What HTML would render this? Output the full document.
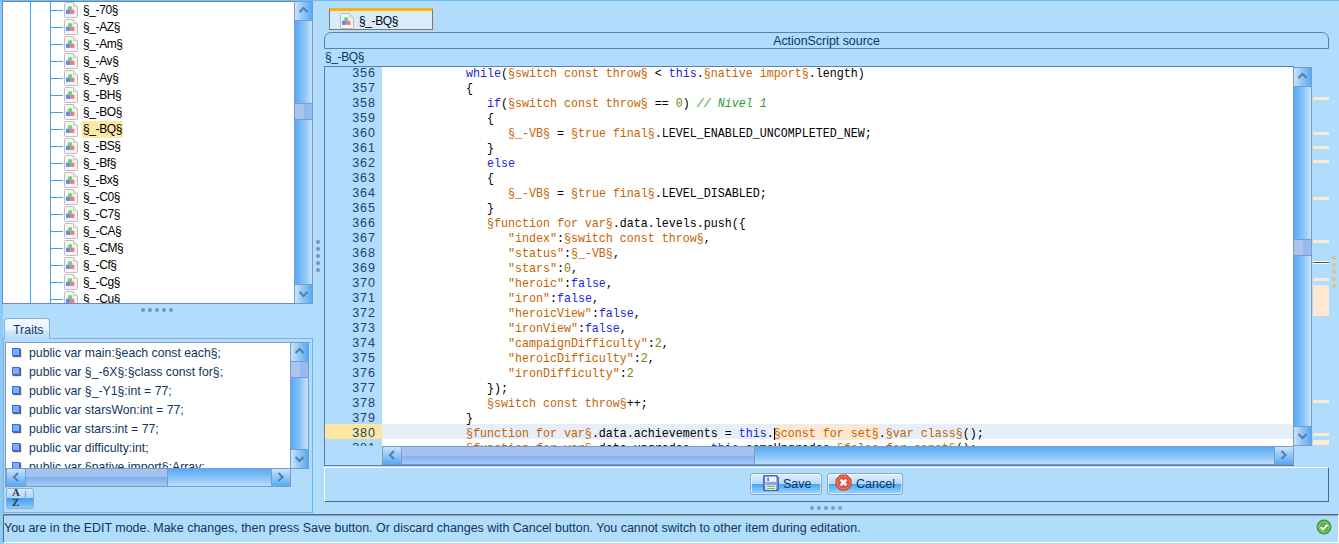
<!DOCTYPE html>
<html><head><meta charset="utf-8"><style>
*{margin:0;padding:0;box-sizing:border-box}
html,body{width:1339px;height:544px;overflow:hidden;background:#b2dcfb;position:relative}
.a{position:absolute}
.t{font-family:"Liberation Sans",sans-serif;white-space:pre}
.vtrack{background:linear-gradient(to right,#58aaf6,#8ac4f8 55%,#c6e4fc);border:1px solid #7d9cc4}
.vbtn{background:linear-gradient(to right,#c8e4fc,#8cc6f8 50%,#58aaf6);border:1px solid #7d9cc4}
.vthumb{background:linear-gradient(to right,#a9c5ee 0,#a9c5ee 55%,#93b7f1 55%,#9cbcf1);border:1px solid #7d9cc4;border-radius:2px}
.htrack{background:linear-gradient(to bottom,#58aaf6,#8ac4f8 55%,#bcdffc);border:1px solid #7d9cc4}
.hbtn{background:linear-gradient(to bottom,#c8e4fc,#8cc6f8 50%,#58aaf6);border:1px solid #7d9cc4}
.hthumb{background:linear-gradient(to bottom,#a4c2ee 0,#a4c2ee 50%,#80aef0 50%,#a8c8f4);border:1px solid #7d9cc4;border-radius:2px}
.tree{font-size:12px;line-height:17px;color:#000;letter-spacing:-0.4px}
.trait{font-size:12.25px;line-height:18px;color:#0f3560}
.status{font-size:12.45px;line-height:18px;color:#0f3560}
.lnum{width:51px;text-align:right;font-size:12.5px;line-height:15px;color:#1b4274;letter-spacing:1px}
.code{font-family:"Liberation Mono",monospace;font-size:11.67px;line-height:15px;white-space:pre;color:#000;transform:scaleY(1.17);transform-origin:0 10px}
.k{color:#2424dc}.o{color:#c46400}.n{color:#7e8010}.c{color:#2f9a2f;font-style:italic}
.bullet{width:8px;height:8px;background:#82aaf8;border:1px solid #2d6ef6;box-shadow:1px 1px 1px rgba(40,30,20,.7)}
.tab{border:1px solid #8aaed2;border-bottom:none;border-radius:4px 4px 0 0;background:linear-gradient(#f4f9fe 0%,#e6f2fc 55%,#d4e4f0 60%,#c4e2fb 80%,#b6ddfb 100%)}
.azbtn{border:1px solid #8aaed2;border-radius:3px;background:linear-gradient(#d8ecfd,#a8d4fa 48%,#3aa0f8 50%,#8ccaf8)}
.btn{border:1px solid #8aa8cc;border-radius:3px;box-shadow:inset 1px 1px 0 rgba(255,255,255,.7),inset -1px -1px 0 rgba(255,255,255,.5);background:linear-gradient(#e2f1fd,#b4dafb 48%,#40a6f8 50%,#a6d4fa)}
.btnt{font-size:12.5px;line-height:16px;color:#0f3560}
</style></head><body>
<div class="a" style="left:0px;top:0px;width:1339px;height:1px;background:#6dbdf4"></div>
<div class="a" style="left:0px;top:1px;width:2px;height:543px;background:#8ccaf8"></div>
<div class="a" style="left:2px;top:304px;width:1px;height:240px;background:#8ec6f2"></div>
<div class="a" style="left:2px;top:1px;width:292px;height:303px;background:#fff;border:1px solid #6b8bb3;border-right:none"></div>
<div class="a" style="left:30px;top:2px;width:1px;height:301px;background:#3fa2f6"></div>
<div class="a" style="left:50px;top:2px;width:1px;height:301px;background:#3fa2f6"></div>
<div class="a" style="left:3px;top:2px;width:291px;height:301px;overflow:hidden">
<div class="a" style="left:48px;top:8px;width:12px;height:1px;background:#3fa2f6"></div>
<div style="position:absolute;left:61px;top:0px">
<svg class="a" style="left:0px;top:0px" width="15" height="16" viewBox="0 0 15 16">
<path d="M0.5 1.5 Q0.5 0.5 1.5 0.5 H9.5 L13.5 4.5 V14.5 Q13.5 15.5 12.5 15.5 H1.5 Q0.5 15.5 0.5 14.5 Z" fill="#f4f4f4" stroke="#bdbdbd"/>
<path d="M9.5 0.5 V4.5 H13.5" fill="#e6e6e6" stroke="#cfcfcf"/>
<rect x="2" y="7.7" width="4.4" height="4.2" fill="#5a8cf2"/>
<rect x="6.2" y="7.7" width="4.2" height="4.2" fill="#f27a7a"/>
<circle cx="6.1" cy="6.3" r="2.2" fill="#6ad66a"/>
</svg>
</div>
<div class="a t tree" style="left:80px;top:0px">§_-70§</div>
<div class="a" style="left:48px;top:25px;width:12px;height:1px;background:#3fa2f6"></div>
<div style="position:absolute;left:61px;top:17px">
<svg class="a" style="left:0px;top:0px" width="15" height="16" viewBox="0 0 15 16">
<path d="M0.5 1.5 Q0.5 0.5 1.5 0.5 H9.5 L13.5 4.5 V14.5 Q13.5 15.5 12.5 15.5 H1.5 Q0.5 15.5 0.5 14.5 Z" fill="#f4f4f4" stroke="#bdbdbd"/>
<path d="M9.5 0.5 V4.5 H13.5" fill="#e6e6e6" stroke="#cfcfcf"/>
<rect x="2" y="7.7" width="4.4" height="4.2" fill="#5a8cf2"/>
<rect x="6.2" y="7.7" width="4.2" height="4.2" fill="#f27a7a"/>
<circle cx="6.1" cy="6.3" r="2.2" fill="#6ad66a"/>
</svg>
</div>
<div class="a t tree" style="left:80px;top:17px">§_-AZ§</div>
<div class="a" style="left:48px;top:42px;width:12px;height:1px;background:#3fa2f6"></div>
<div style="position:absolute;left:61px;top:34px">
<svg class="a" style="left:0px;top:0px" width="15" height="16" viewBox="0 0 15 16">
<path d="M0.5 1.5 Q0.5 0.5 1.5 0.5 H9.5 L13.5 4.5 V14.5 Q13.5 15.5 12.5 15.5 H1.5 Q0.5 15.5 0.5 14.5 Z" fill="#f4f4f4" stroke="#bdbdbd"/>
<path d="M9.5 0.5 V4.5 H13.5" fill="#e6e6e6" stroke="#cfcfcf"/>
<rect x="2" y="7.7" width="4.4" height="4.2" fill="#5a8cf2"/>
<rect x="6.2" y="7.7" width="4.2" height="4.2" fill="#f27a7a"/>
<circle cx="6.1" cy="6.3" r="2.2" fill="#6ad66a"/>
</svg>
</div>
<div class="a t tree" style="left:80px;top:34px">§_-Am§</div>
<div class="a" style="left:48px;top:59px;width:12px;height:1px;background:#3fa2f6"></div>
<div style="position:absolute;left:61px;top:51px">
<svg class="a" style="left:0px;top:0px" width="15" height="16" viewBox="0 0 15 16">
<path d="M0.5 1.5 Q0.5 0.5 1.5 0.5 H9.5 L13.5 4.5 V14.5 Q13.5 15.5 12.5 15.5 H1.5 Q0.5 15.5 0.5 14.5 Z" fill="#f4f4f4" stroke="#bdbdbd"/>
<path d="M9.5 0.5 V4.5 H13.5" fill="#e6e6e6" stroke="#cfcfcf"/>
<rect x="2" y="7.7" width="4.4" height="4.2" fill="#5a8cf2"/>
<rect x="6.2" y="7.7" width="4.2" height="4.2" fill="#f27a7a"/>
<circle cx="6.1" cy="6.3" r="2.2" fill="#6ad66a"/>
</svg>
</div>
<div class="a t tree" style="left:80px;top:51px">§_-Av§</div>
<div class="a" style="left:48px;top:76px;width:12px;height:1px;background:#3fa2f6"></div>
<div style="position:absolute;left:61px;top:68px">
<svg class="a" style="left:0px;top:0px" width="15" height="16" viewBox="0 0 15 16">
<path d="M0.5 1.5 Q0.5 0.5 1.5 0.5 H9.5 L13.5 4.5 V14.5 Q13.5 15.5 12.5 15.5 H1.5 Q0.5 15.5 0.5 14.5 Z" fill="#f4f4f4" stroke="#bdbdbd"/>
<path d="M9.5 0.5 V4.5 H13.5" fill="#e6e6e6" stroke="#cfcfcf"/>
<rect x="2" y="7.7" width="4.4" height="4.2" fill="#5a8cf2"/>
<rect x="6.2" y="7.7" width="4.2" height="4.2" fill="#f27a7a"/>
<circle cx="6.1" cy="6.3" r="2.2" fill="#6ad66a"/>
</svg>
</div>
<div class="a t tree" style="left:80px;top:68px">§_-Ay§</div>
<div class="a" style="left:48px;top:93px;width:12px;height:1px;background:#3fa2f6"></div>
<div style="position:absolute;left:61px;top:85px">
<svg class="a" style="left:0px;top:0px" width="15" height="16" viewBox="0 0 15 16">
<path d="M0.5 1.5 Q0.5 0.5 1.5 0.5 H9.5 L13.5 4.5 V14.5 Q13.5 15.5 12.5 15.5 H1.5 Q0.5 15.5 0.5 14.5 Z" fill="#f4f4f4" stroke="#bdbdbd"/>
<path d="M9.5 0.5 V4.5 H13.5" fill="#e6e6e6" stroke="#cfcfcf"/>
<rect x="2" y="7.7" width="4.4" height="4.2" fill="#5a8cf2"/>
<rect x="6.2" y="7.7" width="4.2" height="4.2" fill="#f27a7a"/>
<circle cx="6.1" cy="6.3" r="2.2" fill="#6ad66a"/>
</svg>
</div>
<div class="a t tree" style="left:80px;top:85px">§_-BH§</div>
<div class="a" style="left:48px;top:110px;width:12px;height:1px;background:#3fa2f6"></div>
<div style="position:absolute;left:61px;top:102px">
<svg class="a" style="left:0px;top:0px" width="15" height="16" viewBox="0 0 15 16">
<path d="M0.5 1.5 Q0.5 0.5 1.5 0.5 H9.5 L13.5 4.5 V14.5 Q13.5 15.5 12.5 15.5 H1.5 Q0.5 15.5 0.5 14.5 Z" fill="#f4f4f4" stroke="#bdbdbd"/>
<path d="M9.5 0.5 V4.5 H13.5" fill="#e6e6e6" stroke="#cfcfcf"/>
<rect x="2" y="7.7" width="4.4" height="4.2" fill="#5a8cf2"/>
<rect x="6.2" y="7.7" width="4.2" height="4.2" fill="#f27a7a"/>
<circle cx="6.1" cy="6.3" r="2.2" fill="#6ad66a"/>
</svg>
</div>
<div class="a t tree" style="left:80px;top:102px">§_-BO§</div>
<div class="a" style="left:48px;top:127px;width:12px;height:1px;background:#3fa2f6"></div>
<div style="position:absolute;left:61px;top:119px">
<svg class="a" style="left:0px;top:0px" width="15" height="16" viewBox="0 0 15 16">
<path d="M0.5 1.5 Q0.5 0.5 1.5 0.5 H9.5 L13.5 4.5 V14.5 Q13.5 15.5 12.5 15.5 H1.5 Q0.5 15.5 0.5 14.5 Z" fill="#f4f4f4" stroke="#bdbdbd"/>
<path d="M9.5 0.5 V4.5 H13.5" fill="#e6e6e6" stroke="#cfcfcf"/>
<rect x="2" y="7.7" width="4.4" height="4.2" fill="#5a8cf2"/>
<rect x="6.2" y="7.7" width="4.2" height="4.2" fill="#f27a7a"/>
<circle cx="6.1" cy="6.3" r="2.2" fill="#6ad66a"/>
</svg>
</div>
<div class="a" style="left:79px;top:119px;width:41px;height:17px;background:#fde9a3"></div>
<div class="a t tree" style="left:80px;top:119px">§_-BQ§</div>
<div class="a" style="left:48px;top:144px;width:12px;height:1px;background:#3fa2f6"></div>
<div style="position:absolute;left:61px;top:136px">
<svg class="a" style="left:0px;top:0px" width="15" height="16" viewBox="0 0 15 16">
<path d="M0.5 1.5 Q0.5 0.5 1.5 0.5 H9.5 L13.5 4.5 V14.5 Q13.5 15.5 12.5 15.5 H1.5 Q0.5 15.5 0.5 14.5 Z" fill="#f4f4f4" stroke="#bdbdbd"/>
<path d="M9.5 0.5 V4.5 H13.5" fill="#e6e6e6" stroke="#cfcfcf"/>
<rect x="2" y="7.7" width="4.4" height="4.2" fill="#5a8cf2"/>
<rect x="6.2" y="7.7" width="4.2" height="4.2" fill="#f27a7a"/>
<circle cx="6.1" cy="6.3" r="2.2" fill="#6ad66a"/>
</svg>
</div>
<div class="a t tree" style="left:80px;top:136px">§_-BS§</div>
<div class="a" style="left:48px;top:161px;width:12px;height:1px;background:#3fa2f6"></div>
<div style="position:absolute;left:61px;top:153px">
<svg class="a" style="left:0px;top:0px" width="15" height="16" viewBox="0 0 15 16">
<path d="M0.5 1.5 Q0.5 0.5 1.5 0.5 H9.5 L13.5 4.5 V14.5 Q13.5 15.5 12.5 15.5 H1.5 Q0.5 15.5 0.5 14.5 Z" fill="#f4f4f4" stroke="#bdbdbd"/>
<path d="M9.5 0.5 V4.5 H13.5" fill="#e6e6e6" stroke="#cfcfcf"/>
<rect x="2" y="7.7" width="4.4" height="4.2" fill="#5a8cf2"/>
<rect x="6.2" y="7.7" width="4.2" height="4.2" fill="#f27a7a"/>
<circle cx="6.1" cy="6.3" r="2.2" fill="#6ad66a"/>
</svg>
</div>
<div class="a t tree" style="left:80px;top:153px">§_-Bf§</div>
<div class="a" style="left:48px;top:178px;width:12px;height:1px;background:#3fa2f6"></div>
<div style="position:absolute;left:61px;top:170px">
<svg class="a" style="left:0px;top:0px" width="15" height="16" viewBox="0 0 15 16">
<path d="M0.5 1.5 Q0.5 0.5 1.5 0.5 H9.5 L13.5 4.5 V14.5 Q13.5 15.5 12.5 15.5 H1.5 Q0.5 15.5 0.5 14.5 Z" fill="#f4f4f4" stroke="#bdbdbd"/>
<path d="M9.5 0.5 V4.5 H13.5" fill="#e6e6e6" stroke="#cfcfcf"/>
<rect x="2" y="7.7" width="4.4" height="4.2" fill="#5a8cf2"/>
<rect x="6.2" y="7.7" width="4.2" height="4.2" fill="#f27a7a"/>
<circle cx="6.1" cy="6.3" r="2.2" fill="#6ad66a"/>
</svg>
</div>
<div class="a t tree" style="left:80px;top:170px">§_-Bx§</div>
<div class="a" style="left:48px;top:195px;width:12px;height:1px;background:#3fa2f6"></div>
<div style="position:absolute;left:61px;top:187px">
<svg class="a" style="left:0px;top:0px" width="15" height="16" viewBox="0 0 15 16">
<path d="M0.5 1.5 Q0.5 0.5 1.5 0.5 H9.5 L13.5 4.5 V14.5 Q13.5 15.5 12.5 15.5 H1.5 Q0.5 15.5 0.5 14.5 Z" fill="#f4f4f4" stroke="#bdbdbd"/>
<path d="M9.5 0.5 V4.5 H13.5" fill="#e6e6e6" stroke="#cfcfcf"/>
<rect x="2" y="7.7" width="4.4" height="4.2" fill="#5a8cf2"/>
<rect x="6.2" y="7.7" width="4.2" height="4.2" fill="#f27a7a"/>
<circle cx="6.1" cy="6.3" r="2.2" fill="#6ad66a"/>
</svg>
</div>
<div class="a t tree" style="left:80px;top:187px">§_-C0§</div>
<div class="a" style="left:48px;top:212px;width:12px;height:1px;background:#3fa2f6"></div>
<div style="position:absolute;left:61px;top:204px">
<svg class="a" style="left:0px;top:0px" width="15" height="16" viewBox="0 0 15 16">
<path d="M0.5 1.5 Q0.5 0.5 1.5 0.5 H9.5 L13.5 4.5 V14.5 Q13.5 15.5 12.5 15.5 H1.5 Q0.5 15.5 0.5 14.5 Z" fill="#f4f4f4" stroke="#bdbdbd"/>
<path d="M9.5 0.5 V4.5 H13.5" fill="#e6e6e6" stroke="#cfcfcf"/>
<rect x="2" y="7.7" width="4.4" height="4.2" fill="#5a8cf2"/>
<rect x="6.2" y="7.7" width="4.2" height="4.2" fill="#f27a7a"/>
<circle cx="6.1" cy="6.3" r="2.2" fill="#6ad66a"/>
</svg>
</div>
<div class="a t tree" style="left:80px;top:204px">§_-C7§</div>
<div class="a" style="left:48px;top:229px;width:12px;height:1px;background:#3fa2f6"></div>
<div style="position:absolute;left:61px;top:221px">
<svg class="a" style="left:0px;top:0px" width="15" height="16" viewBox="0 0 15 16">
<path d="M0.5 1.5 Q0.5 0.5 1.5 0.5 H9.5 L13.5 4.5 V14.5 Q13.5 15.5 12.5 15.5 H1.5 Q0.5 15.5 0.5 14.5 Z" fill="#f4f4f4" stroke="#bdbdbd"/>
<path d="M9.5 0.5 V4.5 H13.5" fill="#e6e6e6" stroke="#cfcfcf"/>
<rect x="2" y="7.7" width="4.4" height="4.2" fill="#5a8cf2"/>
<rect x="6.2" y="7.7" width="4.2" height="4.2" fill="#f27a7a"/>
<circle cx="6.1" cy="6.3" r="2.2" fill="#6ad66a"/>
</svg>
</div>
<div class="a t tree" style="left:80px;top:221px">§_-CA§</div>
<div class="a" style="left:48px;top:246px;width:12px;height:1px;background:#3fa2f6"></div>
<div style="position:absolute;left:61px;top:238px">
<svg class="a" style="left:0px;top:0px" width="15" height="16" viewBox="0 0 15 16">
<path d="M0.5 1.5 Q0.5 0.5 1.5 0.5 H9.5 L13.5 4.5 V14.5 Q13.5 15.5 12.5 15.5 H1.5 Q0.5 15.5 0.5 14.5 Z" fill="#f4f4f4" stroke="#bdbdbd"/>
<path d="M9.5 0.5 V4.5 H13.5" fill="#e6e6e6" stroke="#cfcfcf"/>
<rect x="2" y="7.7" width="4.4" height="4.2" fill="#5a8cf2"/>
<rect x="6.2" y="7.7" width="4.2" height="4.2" fill="#f27a7a"/>
<circle cx="6.1" cy="6.3" r="2.2" fill="#6ad66a"/>
</svg>
</div>
<div class="a t tree" style="left:80px;top:238px">§_-CM§</div>
<div class="a" style="left:48px;top:263px;width:12px;height:1px;background:#3fa2f6"></div>
<div style="position:absolute;left:61px;top:255px">
<svg class="a" style="left:0px;top:0px" width="15" height="16" viewBox="0 0 15 16">
<path d="M0.5 1.5 Q0.5 0.5 1.5 0.5 H9.5 L13.5 4.5 V14.5 Q13.5 15.5 12.5 15.5 H1.5 Q0.5 15.5 0.5 14.5 Z" fill="#f4f4f4" stroke="#bdbdbd"/>
<path d="M9.5 0.5 V4.5 H13.5" fill="#e6e6e6" stroke="#cfcfcf"/>
<rect x="2" y="7.7" width="4.4" height="4.2" fill="#5a8cf2"/>
<rect x="6.2" y="7.7" width="4.2" height="4.2" fill="#f27a7a"/>
<circle cx="6.1" cy="6.3" r="2.2" fill="#6ad66a"/>
</svg>
</div>
<div class="a t tree" style="left:80px;top:255px">§_-Cf§</div>
<div class="a" style="left:48px;top:280px;width:12px;height:1px;background:#3fa2f6"></div>
<div style="position:absolute;left:61px;top:272px">
<svg class="a" style="left:0px;top:0px" width="15" height="16" viewBox="0 0 15 16">
<path d="M0.5 1.5 Q0.5 0.5 1.5 0.5 H9.5 L13.5 4.5 V14.5 Q13.5 15.5 12.5 15.5 H1.5 Q0.5 15.5 0.5 14.5 Z" fill="#f4f4f4" stroke="#bdbdbd"/>
<path d="M9.5 0.5 V4.5 H13.5" fill="#e6e6e6" stroke="#cfcfcf"/>
<rect x="2" y="7.7" width="4.4" height="4.2" fill="#5a8cf2"/>
<rect x="6.2" y="7.7" width="4.2" height="4.2" fill="#f27a7a"/>
<circle cx="6.1" cy="6.3" r="2.2" fill="#6ad66a"/>
</svg>
</div>
<div class="a t tree" style="left:80px;top:272px">§_-Cg§</div>
<div class="a" style="left:48px;top:297px;width:12px;height:1px;background:#3fa2f6"></div>
<div style="position:absolute;left:61px;top:289px">
<svg class="a" style="left:0px;top:0px" width="15" height="16" viewBox="0 0 15 16">
<path d="M0.5 1.5 Q0.5 0.5 1.5 0.5 H9.5 L13.5 4.5 V14.5 Q13.5 15.5 12.5 15.5 H1.5 Q0.5 15.5 0.5 14.5 Z" fill="#f4f4f4" stroke="#bdbdbd"/>
<path d="M9.5 0.5 V4.5 H13.5" fill="#e6e6e6" stroke="#cfcfcf"/>
<rect x="2" y="7.7" width="4.4" height="4.2" fill="#5a8cf2"/>
<rect x="6.2" y="7.7" width="4.2" height="4.2" fill="#f27a7a"/>
<circle cx="6.1" cy="6.3" r="2.2" fill="#6ad66a"/>
</svg>
</div>
<div class="a t tree" style="left:80px;top:289px">§_-Cu§</div>
</div>
<div class="a" style="left:294px;top:1px;width:19px;height:303px;background:#b2dcfb"></div>
<div class="a vtrack" style="left:294px;top:20px;width:19px;height:265px"></div>
<div class="a vbtn" style="left:294px;top:1px;width:19px;height:20px"></div>
<div class="a vbtn" style="left:294px;top:284px;width:19px;height:20px"></div>
<div class="a vthumb" style="left:294px;top:103px;width:19px;height:17px"></div>
<svg class="a" style="left:294px;top:1px" width="19" height="303"><polyline points="5.5,11.0 9.5,7.0 13.5,11.0" fill="none" stroke="#5b7aa6" stroke-width="2"/><polyline points="5.5,291.0 9.5,295.0 13.5,291.0" fill="none" stroke="#5b7aa6" stroke-width="2"/></svg>
<svg class="a" style="left:0;top:0" width="1339" height="544"><circle cx="143" cy="310" r="2" fill="#7094c4"/><circle cx="318" cy="242" r="2" fill="#7094c4"/><circle cx="812" cy="508" r="2" fill="#7a9cc4"/><circle cx="150" cy="310" r="2" fill="#7094c4"/><circle cx="318" cy="249" r="2" fill="#7094c4"/><circle cx="819" cy="508" r="2" fill="#7a9cc4"/><circle cx="157" cy="310" r="2" fill="#7094c4"/><circle cx="318" cy="256" r="2" fill="#7094c4"/><circle cx="826" cy="508" r="2" fill="#7a9cc4"/><circle cx="164" cy="310" r="2" fill="#7094c4"/><circle cx="318" cy="263" r="2" fill="#7094c4"/><circle cx="833" cy="508" r="2" fill="#7a9cc4"/><circle cx="171" cy="310" r="2" fill="#7094c4"/><circle cx="318" cy="270" r="2" fill="#7094c4"/><circle cx="840" cy="508" r="2" fill="#7a9cc4"/></svg>
<div class="a" style="left:3px;top:338px;width:310px;height:175px;border-top:1px solid #8aaed2;border-left:1px solid #8aaed2;border-right:1px solid #62b8f8;border-bottom:1px solid #62b8f8"></div>
<div class="a tab" style="left:4px;top:318px;width:46px;height:21px"><span class="t" style="position:absolute;left:8px;top:4px;font-size:12.4px;color:#0f3a70">Traits</span></div>
<div class="a" style="left:5px;top:342px;width:305px;height:146px;border:1px solid #7f9fc6;border-right:none;border-bottom:none"></div>
<div class="a" style="left:6px;top:343px;width:284px;height:125px;background:#fff"></div>
<div class="a" style="left:6px;top:343px;width:284px;height:125px;overflow:hidden">
<div class="a bullet" style="left:6px;top:5px"></div>
<div class="a t trait" style="left:23px;top:1px">public var main:§each const each§;</div>
<div class="a bullet" style="left:6px;top:24px"></div>
<div class="a t trait" style="left:23px;top:20px">public var §_-6X§:§class const for§;</div>
<div class="a bullet" style="left:6px;top:43px"></div>
<div class="a t trait" style="left:23px;top:39px">public var §_-Y1§:int = 77;</div>
<div class="a bullet" style="left:6px;top:62px"></div>
<div class="a t trait" style="left:23px;top:58px">public var starsWon:int = 77;</div>
<div class="a bullet" style="left:6px;top:81px"></div>
<div class="a t trait" style="left:23px;top:77px">public var stars:int = 77;</div>
<div class="a bullet" style="left:6px;top:100px"></div>
<div class="a t trait" style="left:23px;top:96px">public var difficulty:int;</div>
<div class="a bullet" style="left:6px;top:119px"></div>
<div class="a t trait" style="left:23px;top:115px">public var §native import§:Array;</div>
</div>
<div class="a" style="left:290px;top:342px;width:19px;height:127px;background:#b2dcfb"></div>
<div class="a vtrack" style="left:290px;top:361px;width:19px;height:89px"></div>
<div class="a vbtn" style="left:290px;top:342px;width:19px;height:20px"></div>
<div class="a vbtn" style="left:290px;top:449px;width:19px;height:20px"></div>
<div class="a vthumb" style="left:290px;top:361px;width:19px;height:17px"></div>
<svg class="a" style="left:290px;top:342px" width="19" height="127"><polyline points="5.5,11.0 9.5,7.0 13.5,11.0" fill="none" stroke="#5b7aa6" stroke-width="2"/><polyline points="5.5,115.0 9.5,119.0 13.5,115.0" fill="none" stroke="#5b7aa6" stroke-width="2"/></svg>
<div class="a htrack" style="left:6px;top:468px;width:285px;height:19px"></div>
<div class="a hbtn" style="left:6px;top:468px;width:20px;height:19px"></div>
<div class="a hbtn" style="left:271px;top:468px;width:20px;height:19px"></div>
<div class="a hthumb" style="left:25px;top:468px;width:143px;height:19px"></div>
<svg class="a" style="left:6px;top:468px" width="285" height="19"><polyline points="12.0,5.0 8.0,9.0 12.0,13.0" fill="none" stroke="#5b7aa6" stroke-width="2"/><polyline points="272.5,5.0 276.5,9.0 272.5,13.0" fill="none" stroke="#5b7aa6" stroke-width="2"/></svg>
<div class="a azbtn" style="left:6px;top:488px;width:28px;height:21px"></div>
<div class="a" style="left:12px;top:488px;font-family:'Liberation Serif',serif;font-weight:bold;font-size:11px;line-height:9.5px;color:#3a3a3a">A<br>Z</div>
<div class="a" style="left:25px;top:491px;width:1px;height:12px;background:#7b9ce0"></div>
<svg class="a" style="left:22px;top:498px" width="7" height="6"><polyline points="0.5,0.5 3.5,4.5 6.5,0.5" fill="none" stroke="#7b9ce0" stroke-width="1"/></svg>
<div class="a" style="left:3px;top:515px;width:1336px;height:28px;background:transparent"></div>
<div class="a" style="left:4px;top:515px;width:1334px;height:1px;background:#8aa2ba"></div>
<div class="a" style="left:3px;top:514px;width:1336px;height:29px;border-top:1px solid #56687c;border-left:1px solid #56687c;border-right:1px solid #fff;border-bottom:1px solid #fff"></div>
<div class="a t status" style="left:4px;top:519px">You are in the EDIT mode. Make changes, then press Save button. Or discard changes with Cancel button. You cannot switch to other item during editation.</div>
<svg class="a" style="left:1316px;top:519px" width="16" height="16" viewBox="0 0 16 16">
<circle cx="8" cy="8" r="6.8" fill="#58b048" stroke="#2f9a2f" stroke-width="1.2"/>
<circle cx="8" cy="8" r="5.2" fill="none" stroke="#9ed88e" stroke-width="0.8"/>
<path d="M4.6 8.2 L7 10.4 L11.4 5.8" fill="none" stroke="#fff" stroke-width="2"/>
</svg>
<div class="a" style="left:329px;top:8px;width:104px;height:22px;background:#d8ecfc;border:1px solid #8a7658;border-top:3px solid #fdb10c"></div>
<svg class="a" style="left:340px;top:13px" width="15" height="16" viewBox="0 0 15 16">
<path d="M0.5 1.5 Q0.5 0.5 1.5 0.5 H9.5 L13.5 4.5 V14.5 Q13.5 15.5 12.5 15.5 H1.5 Q0.5 15.5 0.5 14.5 Z" fill="#f4f4f4" stroke="#bdbdbd"/>
<path d="M9.5 0.5 V4.5 H13.5" fill="#e6e6e6" stroke="#cfcfcf"/>
<rect x="2" y="7.7" width="4.4" height="4.2" fill="#5a8cf2"/>
<rect x="6.2" y="7.7" width="4.2" height="4.2" fill="#f27a7a"/>
<circle cx="6.1" cy="6.3" r="2.2" fill="#6ad66a"/>
</svg>
<div class="a t tree" style="left:359px;top:13px">§_-BQ§</div>
<div class="a" style="left:324px;top:32px;width:1005px;height:17px;border:1px solid #5f7fa6;border-radius:7px 7px 0 0;border-bottom:1px solid #5f7fa6"></div>
<div class="a t" style="left:324px;top:34px;width:1005px;text-align:center;font-size:12.4px;line-height:15px;color:#0f3560">ActionScript source</div>
<div class="a t tree" style="left:325px;top:49px;color:#0f3560">§_-BQ§</div>
<div class="a" style="left:324px;top:66px;width:970px;height:400px;border:1px solid #5f7fa6;border-right:none;border-bottom:1px solid #5f7fa6"></div>
<div class="a" style="left:382px;top:67px;width:911px;height:379px;background:#fff"></div>
<div class="a" style="left:382px;top:424px;width:911px;height:15px;background:#e8eef8"></div>
<div class="a" style="left:325px;top:424px;width:57px;height:15px;background:#fde7a0"></div>
<div class="a" style="left:325px;top:67px;width:968px;height:379px;overflow:hidden">
<div class="a" style="left:450px;top:358px;width:105px;height:15px;background:#fde8d4"></div>
<div class="a code" style="left:57px;top:0px">            <span class="k">while</span>(<span class="o">§switch const throw§</span> &lt; <span class="k">this</span>.<span class="o">§native import§</span>.length)</div>
<div class="a t lnum" style="left:0px;top:-1px">356</div>
<div class="a code" style="left:57px;top:15px">            {</div>
<div class="a t lnum" style="left:0px;top:14px">357</div>
<div class="a code" style="left:57px;top:30px">               <span class="k">if</span>(<span class="o">§switch const throw§</span> == <span class="n">0</span>) <span class="c">// Nivel 1</span></div>
<div class="a t lnum" style="left:0px;top:29px">358</div>
<div class="a code" style="left:57px;top:45px">               {</div>
<div class="a t lnum" style="left:0px;top:44px">359</div>
<div class="a code" style="left:57px;top:60px">                  <span class="o">§_-VB§</span> = <span class="o">§true final§</span>.LEVEL_ENABLED_UNCOMPLETED_NEW;</div>
<div class="a t lnum" style="left:0px;top:59px">360</div>
<div class="a code" style="left:57px;top:75px">               }</div>
<div class="a t lnum" style="left:0px;top:74px">361</div>
<div class="a code" style="left:57px;top:90px">               <span class="k">else</span></div>
<div class="a t lnum" style="left:0px;top:89px">362</div>
<div class="a code" style="left:57px;top:105px">               {</div>
<div class="a t lnum" style="left:0px;top:104px">363</div>
<div class="a code" style="left:57px;top:120px">                  <span class="o">§_-VB§</span> = <span class="o">§true final§</span>.LEVEL_DISABLED;</div>
<div class="a t lnum" style="left:0px;top:119px">364</div>
<div class="a code" style="left:57px;top:135px">               }</div>
<div class="a t lnum" style="left:0px;top:134px">365</div>
<div class="a code" style="left:57px;top:150px">               <span class="o">§function for var§</span>.data.levels.push({</div>
<div class="a t lnum" style="left:0px;top:149px">366</div>
<div class="a code" style="left:57px;top:165px">                  <span class="o">&quot;index&quot;</span>:<span class="o">§switch const throw§</span>,</div>
<div class="a t lnum" style="left:0px;top:164px">367</div>
<div class="a code" style="left:57px;top:180px">                  <span class="o">&quot;status&quot;</span>:<span class="o">§_-VB§</span>,</div>
<div class="a t lnum" style="left:0px;top:179px">368</div>
<div class="a code" style="left:57px;top:195px">                  <span class="o">&quot;stars&quot;</span>:<span class="n">0</span>,</div>
<div class="a t lnum" style="left:0px;top:194px">369</div>
<div class="a code" style="left:57px;top:210px">                  <span class="o">&quot;heroic&quot;</span>:<span class="k">false</span>,</div>
<div class="a t lnum" style="left:0px;top:209px">370</div>
<div class="a code" style="left:57px;top:225px">                  <span class="o">&quot;iron&quot;</span>:<span class="k">false</span>,</div>
<div class="a t lnum" style="left:0px;top:224px">371</div>
<div class="a code" style="left:57px;top:240px">                  <span class="o">&quot;heroicView&quot;</span>:<span class="k">false</span>,</div>
<div class="a t lnum" style="left:0px;top:239px">372</div>
<div class="a code" style="left:57px;top:255px">                  <span class="o">&quot;ironView&quot;</span>:<span class="k">false</span>,</div>
<div class="a t lnum" style="left:0px;top:254px">373</div>
<div class="a code" style="left:57px;top:270px">                  <span class="o">&quot;campaignDifficulty&quot;</span>:<span class="n">2</span>,</div>
<div class="a t lnum" style="left:0px;top:269px">374</div>
<div class="a code" style="left:57px;top:285px">                  <span class="o">&quot;heroicDifficulty&quot;</span>:<span class="n">2</span>,</div>
<div class="a t lnum" style="left:0px;top:284px">375</div>
<div class="a code" style="left:57px;top:300px">                  <span class="o">&quot;ironDifficulty&quot;</span>:<span class="n">2</span></div>
<div class="a t lnum" style="left:0px;top:299px">376</div>
<div class="a code" style="left:57px;top:315px">               });</div>
<div class="a t lnum" style="left:0px;top:314px">377</div>
<div class="a code" style="left:57px;top:330px">               <span class="o">§switch const throw§</span>++;</div>
<div class="a t lnum" style="left:0px;top:329px">378</div>
<div class="a code" style="left:57px;top:345px">            }</div>
<div class="a t lnum" style="left:0px;top:344px">379</div>
<div class="a code" style="left:57px;top:360px">            <span class="o">§function for var§</span>.data.achievements = <span class="k">this</span>.<span class="o">§const for set§</span>.<span class="o">§var class§</span>();</div>
<div class="a t lnum" style="left:0px;top:359px">380</div>
<div class="a code" style="left:57px;top:375px">            <span class="o">§function for var§</span>.data.upgrades = <span class="k">this</span>.someUpgrades.<span class="o">§false for const§</span>();</div>
<div class="a t lnum" style="left:0px;top:374px">381</div>
<div class="a" style="left:449px;top:361px;width:1px;height:12px;background:#000"></div>
</div>
<div class="a" style="left:1293px;top:67px;width:19px;height:379px;background:#b2dcfb"></div>
<div class="a vtrack" style="left:1293px;top:86px;width:19px;height:341px"></div>
<div class="a vbtn" style="left:1293px;top:67px;width:19px;height:20px"></div>
<div class="a vbtn" style="left:1293px;top:426px;width:19px;height:20px"></div>
<div class="a vthumb" style="left:1293px;top:239px;width:19px;height:17px"></div>
<svg class="a" style="left:1293px;top:67px" width="19" height="379"><polyline points="5.5,11.0 9.5,7.0 13.5,11.0" fill="none" stroke="#5b7aa6" stroke-width="2"/><polyline points="5.5,367.0 9.5,371.0 13.5,367.0" fill="none" stroke="#5b7aa6" stroke-width="2"/></svg>
<div class="a htrack" style="left:382px;top:446px;width:912px;height:19px"></div>
<div class="a hbtn" style="left:382px;top:446px;width:20px;height:19px"></div>
<div class="a hbtn" style="left:1274px;top:446px;width:20px;height:19px"></div>
<div class="a hthumb" style="left:401px;top:446px;width:354px;height:19px"></div>
<svg class="a" style="left:382px;top:446px" width="912" height="19"><polyline points="12.0,5.0 8.0,9.0 12.0,13.0" fill="none" stroke="#5b7aa6" stroke-width="2"/><polyline points="899.5,5.0 903.5,9.0 899.5,13.0" fill="none" stroke="#5b7aa6" stroke-width="2"/></svg>
<div class="a" style="left:1313px;top:97px;width:16px;height:3px;background:#fde8d2"></div>
<div class="a" style="left:1313px;top:132px;width:16px;height:3px;background:#fde8d2"></div>
<div class="a" style="left:1313px;top:146px;width:16px;height:3px;background:#fde8d2"></div>
<div class="a" style="left:1313px;top:160px;width:16px;height:3px;background:#fde8d2"></div>
<div class="a" style="left:1313px;top:197px;width:16px;height:3px;background:#fde8d2"></div>
<div class="a" style="left:1313px;top:240px;width:16px;height:3px;background:#fde8d2"></div>
<div class="a" style="left:1313px;top:278px;width:16px;height:3px;background:#fde8d2"></div>
<div class="a" style="left:1313px;top:400px;width:16px;height:3px;background:#fde8d2"></div>
<div class="a" style="left:1313px;top:433px;width:16px;height:3px;background:#fde8d2"></div>
<div class="a" style="left:1313px;top:440px;width:16px;height:5px;background:#fde8d2"></div>
<div class="a" style="left:1313px;top:285px;width:16px;height:31px;background:#fde8d2"></div>
<div class="a" style="left:1313px;top:261px;width:16px;height:3px;background:#fff"></div>
<div class="a" style="left:1313px;top:262px;width:16px;height:1px;background:#555"></div>
<svg class="a" style="left:0;top:0" width="1339" height="544"><circle cx="1334" cy="258" r="2" fill="#d8c77c"/><circle cx="1334" cy="265" r="2" fill="#d8c77c"/><circle cx="1334" cy="272" r="2" fill="#d8c77c"/><circle cx="1334" cy="279" r="2" fill="#d8c77c"/><circle cx="1334" cy="286" r="2" fill="#d8c77c"/></svg>
<div class="a" style="left:324px;top:467px;width:1005px;height:35px;border-top:1px solid #fff;border-left:1px solid #fff;border-right:1px solid #56687c;border-bottom:1px solid #56687c"></div>
<div class="a btn" style="left:750px;top:473px;width:72px;height:22px"></div>
<div class="a btn" style="left:827px;top:473px;width:76px;height:22px"></div>
<svg class="a" style="left:763px;top:475px" width="16" height="16" viewBox="0 0 16 16">
<path d="M0.8 1.5 Q0.8 0.8 1.5 0.8 H13.5 L15.2 2.5 V14.5 Q15.2 15.2 14.5 15.2 H1.5 Q0.8 15.2 0.8 14.5 Z" fill="#86a6e6" stroke="#3d63b6" stroke-width="1.4"/>
<rect x="2.2" y="1.6" width="11" height="5.2" fill="#f2f5fb"/>
<rect x="4.3" y="2.4" width="1.6" height="3.6" fill="#4d72c0"/>
<rect x="2" y="6.8" width="0.8" height="8" fill="#c8d6f2"/>
<rect x="3.2" y="10" width="9.6" height="5" fill="#f8f8f8"/>
<rect x="4" y="10.7" width="8" height="1.3" fill="#7cbc50"/>
<rect x="4" y="12.9" width="8" height="1.3" fill="#7cbc50"/>
</svg>
<div class="a t btnt" style="left:783px;top:476px">Save</div>
<svg class="a" style="left:835px;top:474px" width="17" height="17" viewBox="0 0 17 17">
<polygon points="5.3,1 11.7,1 16,5.3 16,11.7 11.7,16 5.3,16 1,11.7 1,5.3" fill="#e5533a" stroke="#c23a22" stroke-width="1"/>
<polygon points="5.8,2.2 11.2,2.2 14.8,5.8 14.8,11.2 11.2,14.8 5.8,14.8 2.2,11.2 2.2,5.8" fill="none" stroke="#f3907c" stroke-width="0.7"/>
<path d="M5.6 5.6 L11.4 11.4 M11.4 5.6 L5.6 11.4" stroke="#fff" stroke-width="2.6"/>
</svg>
<div class="a t btnt" style="left:856px;top:476px">Cancel</div>
</body></html>
